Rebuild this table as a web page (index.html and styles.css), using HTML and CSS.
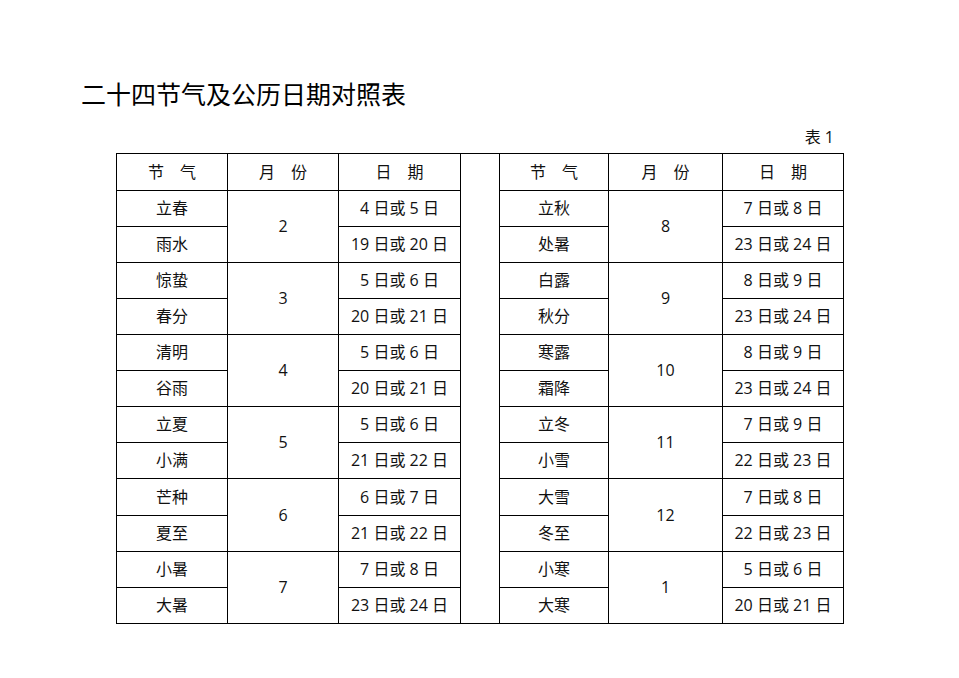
FILE: index.html
```html
<!DOCTYPE html>
<html lang="zh">
<head>
<meta charset="utf-8">
<link rel="stylesheet" href="styles.css">
</head>
<body>
<div class="page">
  <h1 class="title">二十四节气及公历日期对照表</h1>
  <div class="sheet">
    <div class="caption">表 1</div>
    <table class="grid">
      <colgroup>
        <col class="c1"><col class="c2"><col class="c3"><col class="c4"><col class="c5"><col class="c6"><col class="c7">
      </colgroup>
      <tr class="head">
        <td>节　气</td><td>月　份</td><td>日　期</td>
        <td class="gap" rowspan="13"></td>
        <td>节　气</td><td>月　份</td><td>日　期</td>
      </tr>
      <tr><td>立春</td><td rowspan="2">2</td><td>4 日或 5 日</td><td>立秋</td><td rowspan="2">8</td><td>7 日或 8 日</td></tr>
      <tr><td>雨水</td><td>19 日或 20 日</td><td>处暑</td><td>23 日或 24 日</td></tr>
      <tr><td>惊蛰</td><td rowspan="2">3</td><td>5 日或 6 日</td><td>白露</td><td rowspan="2">9</td><td>8 日或 9 日</td></tr>
      <tr><td>春分</td><td>20 日或 21 日</td><td>秋分</td><td>23 日或 24 日</td></tr>
      <tr><td>清明</td><td rowspan="2">4</td><td>5 日或 6 日</td><td>寒露</td><td rowspan="2">10</td><td>8 日或 9 日</td></tr>
      <tr><td>谷雨</td><td>20 日或 21 日</td><td>霜降</td><td>23 日或 24 日</td></tr>
      <tr><td>立夏</td><td rowspan="2">5</td><td>5 日或 6 日</td><td>立冬</td><td rowspan="2">11</td><td>7 日或 9 日</td></tr>
      <tr><td>小满</td><td>21 日或 22 日</td><td>小雪</td><td>22 日或 23 日</td></tr>
      <tr class="tall"><td>芒种</td><td rowspan="2">6</td><td>6 日或 7 日</td><td>大雪</td><td rowspan="2">12</td><td>7 日或 8 日</td></tr>
      <tr><td>夏至</td><td>21 日或 22 日</td><td>冬至</td><td>22 日或 23 日</td></tr>
      <tr><td>小暑</td><td rowspan="2">7</td><td>7 日或 8 日</td><td>小寒</td><td rowspan="2">1</td><td>5 日或 6 日</td></tr>
      <tr><td>大暑</td><td>23 日或 24 日</td><td>大寒</td><td>20 日或 21 日</td></tr>
    </table>
  </div>
</div>
</body>
</html>
```

FILE: styles.css
```css
html, body {
  margin: 0;
  padding: 0;
  background: #fff;
}
body {
  font-family: "Open Sans", "Noto Sans CJK SC", sans-serif;
  color: #111;
}
.page {
  padding: 78px 0 0 81px;
}
.title {
  margin: 0;
  font-family: "Noto Sans CJK SC", sans-serif;
  font-size: 25px;
  font-weight: normal;
  line-height: 30px;
  color: #000;
}
.sheet {
  margin-left: 35px;
  width: 727px;
}
.caption {
  margin-top: 19px;
  font-size: 16px;
  line-height: 20px;
  text-align: right;
  padding-right: 9px;
}
.grid {
  margin-top: 6px;
  border-collapse: collapse;
  table-layout: fixed;
  width: 727px;
}
.c1 { width: 111px; }
.c2 { width: 111px; }
.c3 { width: 122px; }
.c4 { width: 39px; }
.c5 { width: 109px; }
.c6 { width: 114px; }
.c7 { width: 121px; }
.grid td {
  border: 1px solid #000;
  height: 34px;
  padding: 0 0 1px;
  text-align: center;
  vertical-align: middle;
  font-size: 16px;
  line-height: 20px;
  white-space: nowrap;
}
.grid tr.head td {
  height: 35px;
}
.grid tr.tall td {
  height: 35px;
}
```
